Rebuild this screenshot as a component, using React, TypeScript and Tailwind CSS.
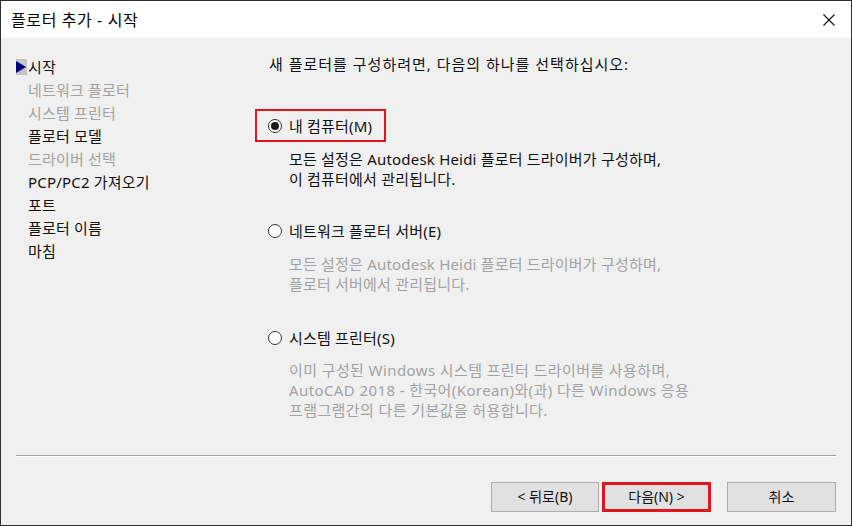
import React from "react";

const font = { fontFamily: '"Noto Sans", "Noto Sans CJK KR", sans-serif' };

function Radio({ checked }: { checked?: boolean }) {
  return (
    <span className="relative inline-flex h-[14px] w-[14px] shrink-0 items-center justify-center rounded-full border border-[#333333] bg-white">
      {checked && <span className="h-[8px] w-[8px] rounded-full bg-[#1a1a1a]" />}
    </span>
  );
}

function NavItem({ label, dim, active }: { label: string; dim?: boolean; active?: boolean }) {
  return (
    <div className="flex h-[23px] items-center">
      <div className="flex w-[12px] items-center">
        {active && (
          <span className="flex h-[16px] w-[11px] items-center bg-[#c4c4c4]">
            <svg width="11" height="12" viewBox="0 0 11 12">
              <path d="M0 0 L10 6 L0 12 Z" fill="#00007a" />
            </svg>
          </span>
        )}
      </div>
      <span className={dim ? "text-[#a3a3a3]" : "text-[#111111]"}>{label}</span>
    </div>
  );
}

export default function App() {
  return (
    <div
      className="flex h-[526px] w-[852px] flex-col overflow-hidden border border-[#2e2e2e] bg-[#f0f0f0] text-[15px] leading-[20px] tracking-[0.2px] text-[#111111]"
      style={font}
    >
      {/* title bar */}
      <div className="flex h-[37px] shrink-0 items-center justify-between bg-white pl-[10px] pr-[16px]">
        <span className="text-[16px] tracking-[0.6px] text-black">플로터 추가 - 시작</span>
        <svg width="12" height="12" viewBox="0 0 12 12">
          <path d="M0.5 0.5 L11.5 11.5 M11.5 0.5 L0.5 11.5" stroke="#111" strokeWidth="1.1" />
        </svg>
      </div>

      {/* content */}
      <div className="flex flex-1 pt-[16px]">
        <div className="w-[252px] shrink-0 pl-[15px] pt-[1px]">
          <NavItem label="시작" active />
          <NavItem label="네트워크 플로터" dim />
          <NavItem label="시스템 프린터" dim />
          <NavItem label="플로터 모델" />
          <NavItem label="드라이버 선택" dim />
          <NavItem label="PCP/PC2 가져오기" />
          <NavItem label="포트" />
          <NavItem label="플로터 이름" />
          <NavItem label="마침" />
        </div>

        <div className="flex flex-col">
          <div className="pl-[16px] tracking-[1px]">새 플로터를 구성하려면, 다음의 하나를 선택하십시오:</div>

          <div className="relative mt-[42px] flex h-[20px] items-center gap-[7px] pl-[15px]">
            <span className="pointer-events-none absolute left-[2px] top-[-7px] h-[33px] w-[131px] border-2 border-[#e0161e]" />
            <Radio checked />
            <span>내 컴퓨터(M)</span>
          </div>
          <div className="mt-[13px] pl-[36px] text-[#111111]">
            <div>모든 설정은 Autodesk Heidi 플로터 드라이버가 구성하며,</div>
            <div>이 컴퓨터에서 관리됩니다.</div>
          </div>

          <div className="mt-[32px] flex h-[20px] items-center gap-[7px] pl-[15px]">
            <Radio />
            <span>네트워크 플로터 서버(E)</span>
          </div>
          <div className="mt-[13px] pl-[36px] text-[#a3a3a3]">
            <div>모든 설정은 Autodesk Heidi 플로터 드라이버가 구성하며,</div>
            <div>플로터 서버에서 관리됩니다.</div>
          </div>

          <div className="mt-[34px] flex h-[20px] items-center gap-[7px] pl-[15px]">
            <Radio />
            <span>시스템 프린터(S)</span>
          </div>
          <div className="mt-[12px] pl-[36px] tracking-[0.4px] text-[#a3a3a3]">
            <div>이미 구성된 Windows 시스템 프린터 드라이버를 사용하며,</div>
            <div>AutoCAD 2018 - 한국어(Korean)와(과) 다른 Windows 응용</div>
            <div>프램그램간의 다른 기본값을 허용합니다.</div>
          </div>
        </div>
      </div>

      {/* separator */}
      <div className="mx-[15px] h-[2px] shrink-0 border-t border-[#a0a0a0] bg-white" />

      {/* buttons */}
      <div className="flex h-[68px] shrink-0 items-start justify-end pr-[15px] pt-[25px] text-[14px] tracking-normal">
        <button className="mr-[3px] flex h-[30px] w-[108px] items-center justify-center border border-[#adadad] bg-[#e1e1e1] text-[#111]">
          &lt; 뒤로(B)
        </button>
        <button className="mr-[16px] flex h-[30px] w-[109px] items-center justify-center border-[3px] border-[#e0161e] bg-[#e1e1e1] text-[#111]">
          다음(N) &gt;
        </button>
        <button className="flex h-[30px] w-[109px] items-center justify-center border border-[#adadad] bg-[#e1e1e1] text-[#111]">
          취소
        </button>
      </div>
    </div>
  );
}
